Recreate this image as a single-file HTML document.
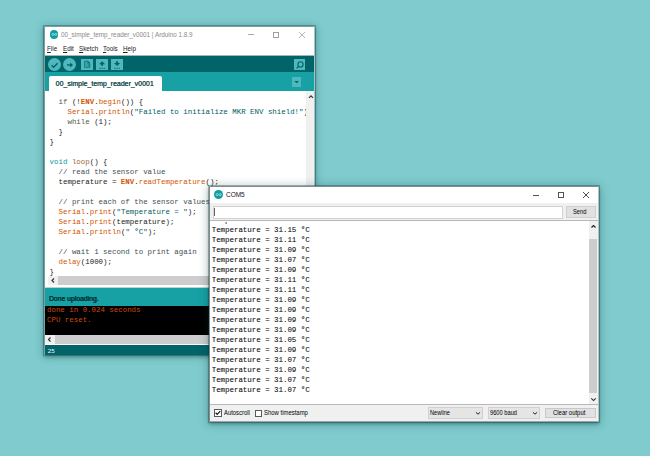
<!DOCTYPE html>
<html><head><meta charset="utf-8">
<style>
*{margin:0;padding:0;box-sizing:border-box}
html,body{width:650px;height:456px;overflow:hidden;background:#7fcbce;position:relative;font-family:"Liberation Sans",sans-serif}
.a{position:absolute}
.mono{position:absolute;font-family:"Liberation Mono",monospace;font-size:7.43px;line-height:10px;white-space:pre}
.t{position:absolute;font-family:"Liberation Sans",sans-serif;white-space:pre;line-height:10px}
.k1{color:#00979c}
.k2{color:#d35400}
.k3{color:#55584a}
.lp{color:#9a6a3a}
.kb{color:#d35400;font-weight:bold}
.str{color:#005c5f}
.cm{color:#434f54}
.cb{position:absolute;background:#4fb8bc}
.sq{position:absolute;background:#4fb8bc}
</style></head><body>

<!-- ================= Arduino window ================= -->
<div class="a" style="left:44px;top:26px;width:271px;height:329px;box-shadow:0 0 0 1px rgba(0,50,50,.30),0 2px 3px rgba(0,40,40,.3),0 1px 8px 1px rgba(0,55,55,.28)"></div>

<div class="a" style="left:44px;top:26px;width:271px;height:329px;background:#fff;border:1px solid #7d9fa1;border-right-color:#a9c4c5;border-bottom-color:#8fb0b1"></div>
<!-- title -->
<div class="a" style="left:49.6px;top:30px;width:8.8px;height:8.8px;border-radius:50%;background:#0e9ea2"></div>
<svg class="a" style="left:49.6px;top:30px" width="9" height="9" viewBox="0 0 9 9"><path d="M1.9 4.4C1.9 3.2 3.7 3.2 4.4 4.4C5.1 5.6 6.9 5.6 6.9 4.4C6.9 3.2 5.1 3.2 4.4 4.4C3.7 5.6 1.9 5.6 1.9 4.4Z" fill="none" stroke="#a8dfe1" stroke-width=".9"/></svg>
<div class="t" style="left:61.3px;top:29.84px;font-size:7.1px;color:#8a8a8a;transform:scaleX(0.893);transform-origin:0 0">00_simple_temp_reader_v0001 | Arduino 1.8.9</div>
<div class="a" style="left:248px;top:34.3px;width:6px;height:1px;background:#aaa"></div>
<div class="a" style="left:273.3px;top:32px;width:5.7px;height:5.7px;border:.7px solid #a0a0a0"></div>
<svg class="a" style="left:298px;top:31px" width="8" height="8" viewBox="0 0 8 8"><path d="M1 1L7 7M7 1L1 7" stroke="#999" stroke-width=".7"/></svg>
<!-- menu -->
<div class="t" style="left:47.4px;top:44.31px;font-size:7.2px;color:#222;transform:scaleX(0.875);transform-origin:0 0"><u style="text-decoration-thickness:.6px;text-underline-offset:1px">F</u>ile</div>
<div class="t" style="left:62.5px;top:44.31px;font-size:7.2px;color:#222;transform:scaleX(0.875);transform-origin:0 0"><u style="text-decoration-thickness:.6px;text-underline-offset:1px">E</u>dit</div>
<div class="t" style="left:78.6px;top:44.31px;font-size:7.2px;color:#222;transform:scaleX(0.875);transform-origin:0 0"><u style="text-decoration-thickness:.6px;text-underline-offset:1px">S</u>ketch</div>
<div class="t" style="left:102.5px;top:44.31px;font-size:7.2px;color:#222;transform:scaleX(0.875);transform-origin:0 0"><u style="text-decoration-thickness:.6px;text-underline-offset:1px">T</u>ools</div>
<div class="t" style="left:122.8px;top:44.31px;font-size:7.2px;color:#222;transform:scaleX(0.875);transform-origin:0 0"><u style="text-decoration-thickness:.6px;text-underline-offset:1px">H</u>elp</div>
<div class="a" style="left:45px;top:55px;width:269px;height:1px;background:#9fb9ba"></div>
<!-- toolbar -->
<div class="a" style="left:45px;top:56px;width:269px;height:16px;background:#006468"></div>
<div class="cb" style="left:47.5px;top:57.5px;width:13.5px;height:13.5px;border-radius:50%"></div>
<div class="cb" style="left:62.7px;top:57.5px;width:13.5px;height:13.5px;border-radius:50%"></div>
<svg class="a" style="left:47.5px;top:57.5px" width="14" height="14" viewBox="0 0 14 14"><path d="M3.6 7.2L5.6 9.2L9.6 5.2" fill="none" stroke="#006468" stroke-width="1.5"/></svg>
<svg class="a" style="left:62.7px;top:57.5px" width="14" height="14" viewBox="0 0 14 14"><path d="M4 7H9" stroke="#006468" stroke-width="1.4"/><path d="M7.2 4.5L10 7L7.2 9.5Z" fill="#006468"/></svg>
<div class="sq" style="left:81px;top:58.7px;width:12px;height:11.5px"></div>
<div class="sq" style="left:95.8px;top:58.7px;width:12px;height:11.5px"></div>
<div class="sq" style="left:111px;top:58.7px;width:12px;height:11.5px"></div>
<svg class="a" style="left:81px;top:58.7px" width="12" height="12" viewBox="0 0 12 12"><path d="M3.5 2.1H6.9L8.8 4V8.6H3.5Z" fill="#34a2a6" stroke="#137a7e" stroke-width=".8"/><path d="M6.6 1.9L9 4.3H6.6Z" fill="#006468"/><path d="M7.4 5.6H8.8M7.4 7.1H8.8" stroke="#0e6f73" stroke-width=".8"/></svg>
<svg class="a" style="left:95.8px;top:58.7px" width="12" height="12" viewBox="0 0 12 12"><path d="M6.1 2.3L9.2 5.3H7.1V6.8H5.1V5.3H3Z" fill="#006468"/><path d="M3.4 9.3H9" stroke="#0f6e72" stroke-width="1" stroke-dasharray="1.4 .7"/></svg>
<svg class="a" style="left:111px;top:58.7px" width="12" height="12" viewBox="0 0 12 12"><path d="M6.1 6.9L9.2 3.9H7.1V2.3H5.1V3.9H3Z" fill="#006468"/><path d="M3.4 9.3H9" stroke="#0f6e72" stroke-width="1" stroke-dasharray="1.4 .7"/></svg>
<div class="sq" style="left:293.5px;top:58.6px;width:11.7px;height:11.4px"></div>
<svg class="a" style="left:293.5px;top:58.6px" width="12" height="12" viewBox="0 0 12 12"><circle cx="6.5" cy="5.4" r="2.6" fill="none" stroke="#006468" stroke-width="1.1"/><path d="M4.6 7.4L2.6 9.4" stroke="#006468" stroke-width="1.3"/></svg>
<!-- header -->
<div class="a" style="left:45px;top:72px;width:269px;height:19px;background:#17a1a5"></div>
<div class="a" style="left:49px;top:76.4px;width:112.5px;height:14.6px;background:#fff;border-radius:2px 2px 0 0"></div>
<div class="t" style="left:55.6px;top:78.8px;font-size:6.97px;color:#134a4f;text-shadow:.25px 0 0 #134a4f">00_simple_temp_reader_v0001</div>
<div class="a" style="left:292px;top:77.3px;width:9.3px;height:9.7px;background:#4fb8bc"></div>
<svg class="a" style="left:292px;top:77.3px" width="10" height="10" viewBox="0 0 10 10"><path d="M2.2 3.9H7.1L4.65 6.3Z" fill="#006468"/></svg>
<!-- editor -->
<div class="a" style="left:306px;top:91px;width:8px;height:185px;background:#f0f0f0"></div>
<svg class="a" style="left:306.5px;top:93px" width="8" height="8" viewBox="0 0 8 8"><path d="M2 4.8L4 2.8L6 4.8" fill="none" stroke="#333" stroke-width="1.2"/></svg>
<div class="mono" style="left:49.6px;top:96.5px;width:256.4px;overflow:hidden;color:#222"><span class="k3">  if</span> (!<span class="kb">ENV</span>.<span class="k2">begin</span>()) {
    <span class="k2">Serial</span>.<span class="k2">println</span>(<span class="str">"Failed to initialize MKR ENV shield!"</span>);
    <span class="k3">while</span> (1);
  }
}

<span class="k1">void</span> <span class="lp">loop</span>() {
  <span class="cm">// read the sensor value</span>
  temperature = <span class="kb">ENV</span>.<span class="k2">readTemperature</span>();

  <span class="cm">// print each of the sensor values</span>
  <span class="k2">Serial</span>.<span class="k2">print</span>(<span class="str">"Temperature = "</span>);
  <span class="k2">Serial</span>.<span class="k2">print</span>(temperature);
  <span class="k2">Serial</span>.<span class="k2">println</span>(<span class="str">" <b>°</b>C"</span>);

  <span class="cm">// wait 1 second to print again</span>
  <span class="k2">delay</span>(1000);
}</div>
<div class="a" style="left:48px;top:276px;width:258px;height:9px;background:#cdcdcd"></div>
<div class="a" style="left:48px;top:276px;width:10px;height:9px;background:#f0f0f0"></div>
<svg class="a" style="left:48px;top:276px" width="10" height="9" viewBox="0 0 10 9"><path d="M6 2.5L4 4.5L6 6.5" fill="none" stroke="#333" stroke-width="1.2"/></svg>
<div class="a" style="left:45px;top:287px;width:269px;height:1px;background:#b9d3d4"></div>
<!-- status -->
<div class="a" style="left:45px;top:288px;width:269px;height:18px;background:#17a1a5"></div>
<div class="t" style="left:48.9px;top:293.5px;font-size:6.82px;color:#00282b;text-shadow:.3px 0 0 #00282b">Done uploading.</div>
<div class="a" style="left:45px;top:306px;width:269px;height:29px;background:#000"></div>
<div class="mono" style="left:47px;top:304.5px;color:#d04a08">done in 0.024 seconds
CPU reset.</div>
<div class="a" style="left:45px;top:335px;width:269px;height:9px;background:#cdcdcd"></div>
<div class="a" style="left:45px;top:335px;width:10px;height:9px;background:#f0f0f0"></div>
<svg class="a" style="left:45px;top:335px" width="10" height="9" viewBox="0 0 10 9"><path d="M5.5 2.5L3.5 4.5L5.5 6.5" fill="none" stroke="#333" stroke-width="1.2"/></svg>
<div class="a" style="left:45px;top:344.5px;width:269px;height:10px;background:#006468"></div>
<div class="t" style="left:47.8px;top:345.8px;font-size:6.2px;color:#f2fafa">25</div>

<!-- ================= Serial monitor ================= -->
<div class="a" style="left:209px;top:186px;width:390px;height:236px;box-shadow:0 0 0 1px rgba(0,50,50,.30),0 2px 3px rgba(0,40,40,.3),0 1px 9px 1px rgba(0,55,55,.30)"></div>

<div class="a" style="left:209px;top:186px;width:390px;height:236px;background:#f0f0f0;border:1px solid #7f8c8d;border-right-color:#b9c2c2;border-bottom-color:#9aa5a5"></div>
<div class="a" style="left:210px;top:187px;width:388px;height:16px;background:#fff"></div>
<div class="a" style="left:213.9px;top:189.9px;width:9.4px;height:9.2px;border-radius:50%;background:#0e9ea2"></div>
<svg class="a" style="left:213.9px;top:189.9px" width="10" height="10" viewBox="0 0 10 10"><path d="M2.1 4.6C2.1 3.3 4 3.3 4.7 4.6C5.4 5.9 7.3 5.9 7.3 4.6C7.3 3.3 5.4 3.3 4.7 4.6C4 5.9 2.1 5.9 2.1 4.6Z" fill="none" stroke="#a8dfe1" stroke-width=".9"/></svg>
<div class="t" style="left:226.1px;top:190.00px;font-size:7.8px;color:#111;transform:scaleX(0.83);transform-origin:0 0">COM5</div>
<div class="a" style="left:532.5px;top:194.5px;width:6px;height:1px;background:#555"></div>
<div class="a" style="left:557.5px;top:191.8px;width:6px;height:6px;border:.7px solid #555"></div>
<svg class="a" style="left:582px;top:190.8px" width="8" height="8" viewBox="0 0 8 8"><path d="M1 1L7 7M7 1L1 7" stroke="#222" stroke-width=".8"/></svg>
<div class="a" style="left:212.5px;top:205.5px;width:350px;height:13px;background:#fff;border:1px solid #d2d2d2"></div>
<div class="a" style="left:214px;top:208px;width:1px;height:8px;background:#666"></div>
<div class="a" style="left:565.5px;top:206.3px;width:30.5px;height:11.5px;background:#e1e1e1;border:1px solid #cfcfcf"></div>
<div class="t" style="left:573.3px;top:207.28px;font-size:6.7px;color:#000;transform:scaleX(0.86);transform-origin:0 0">Send</div>
<div class="a" style="left:210px;top:220px;width:388px;height:185px;background:#fff;border-top:1px solid #b8b8b8;border-bottom:1px solid #b8b8b8"></div>
<div class="mono" style="left:211.7px;top:214.5px;width:377px;height:189px;overflow:hidden;color:#1a1a1a;text-shadow:.15px 0 0 rgba(30,30,30,.35);clip-path:inset(7.5px 0 0 0)">Temperature = 31.15 <b style="font-weight:bold">°</b>C
Temperature = 31.15 <b style="font-weight:bold">°</b>C
Temperature = 31.11 <b style="font-weight:bold">°</b>C
Temperature = 31.09 <b style="font-weight:bold">°</b>C
Temperature = 31.07 <b style="font-weight:bold">°</b>C
Temperature = 31.09 <b style="font-weight:bold">°</b>C
Temperature = 31.11 <b style="font-weight:bold">°</b>C
Temperature = 31.11 <b style="font-weight:bold">°</b>C
Temperature = 31.09 <b style="font-weight:bold">°</b>C
Temperature = 31.09 <b style="font-weight:bold">°</b>C
Temperature = 31.09 <b style="font-weight:bold">°</b>C
Temperature = 31.09 <b style="font-weight:bold">°</b>C
Temperature = 31.05 <b style="font-weight:bold">°</b>C
Temperature = 31.09 <b style="font-weight:bold">°</b>C
Temperature = 31.07 <b style="font-weight:bold">°</b>C
Temperature = 31.09 <b style="font-weight:bold">°</b>C
Temperature = 31.07 <b style="font-weight:bold">°</b>C
Temperature = 31.07 <b style="font-weight:bold">°</b>C</div>
<div class="a" style="left:589px;top:221px;width:9px;height:183px;background:#f0f0f0"></div>
<div class="a" style="left:589px;top:238.7px;width:8px;height:154.3px;background:#cdcdcd"></div>
<svg class="a" style="left:589px;top:222px" width="9" height="9" viewBox="0 0 9 9"><path d="M2.5 5.5L4.5 3.5L6.5 5.5" fill="none" stroke="#222" stroke-width="1.2"/></svg>
<svg class="a" style="left:589px;top:395px" width="9" height="9" viewBox="0 0 9 9"><path d="M2.3 3.4L4.5 5.6L6.7 3.4" fill="none" stroke="#2a2a2a" stroke-width="1.05"/></svg>
<!-- bottom panel -->
<div class="a" style="left:214.2px;top:409.3px;width:7.7px;height:7.7px;background:#fff;border:1px solid #5a5a5a"></div>
<svg class="a" style="left:214.2px;top:409.3px" width="8" height="8" viewBox="0 0 8 8"><path d="M1.6 3.8L3.2 5.4L6.3 2.1" fill="none" stroke="#1a1a1a" stroke-width="1.25"/></svg>
<div class="t" style="left:223.9px;top:407.65px;font-size:6.5px;color:#000;transform:scaleX(0.905);transform-origin:0 0">Autoscroll</div>
<div class="a" style="left:254.8px;top:409.5px;width:7.6px;height:7.6px;background:#fff;border:1px solid #5a5a5a"></div>
<div class="t" style="left:264px;top:407.65px;font-size:6.5px;color:#000;transform:scaleX(0.914);transform-origin:0 0">Show timestamp</div>
<div class="a" style="left:428.3px;top:407.2px;width:55.1px;height:11.5px;background:#e5e5e5;border:1px solid #d0d0d0"></div>
<div class="t" style="left:429.6px;top:407.75px;font-size:6.5px;color:#000;transform:scaleX(0.86);transform-origin:0 0">Newline</div>
<svg class="a" style="left:474px;top:409px" width="8" height="8" viewBox="0 0 8 8"><path d="M1.9 3.3L4 5.2L6.1 3.3" fill="none" stroke="#222" stroke-width="1"/></svg>
<div class="a" style="left:488.3px;top:407.2px;width:52px;height:11.5px;background:#e5e5e5;border:1px solid #d0d0d0"></div>
<div class="t" style="left:489.7px;top:407.75px;font-size:6.5px;color:#000;transform:scaleX(0.88);transform-origin:0 0">9600 baud</div>
<svg class="a" style="left:531px;top:409px" width="8" height="8" viewBox="0 0 8 8"><path d="M1.9 3.3L4 5.2L6.1 3.3" fill="none" stroke="#222" stroke-width="1"/></svg>
<div class="a" style="left:545.4px;top:407.8px;width:50.4px;height:10.7px;background:#e1e1e1;border:1px solid #c8c8c8"></div>
<div class="t" style="left:552.9px;top:407.91px;font-size:6.6px;color:#000;transform:scaleX(0.9);transform-origin:0 0">Clear output</div>

</body></html>
